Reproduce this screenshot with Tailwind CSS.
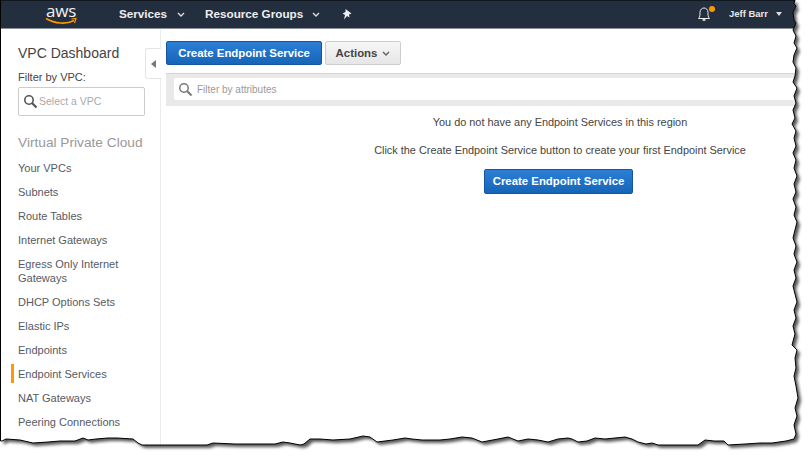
<!DOCTYPE html>
<html>
<head>
<meta charset="utf-8">
<script src="https://cdn.jsdelivr.net/npm/@tailwindcss/browser@4"></script>
</head>
<body class="bg-white">
<div class="relative w-[810px] h-[456px] overflow-hidden bg-white font-['Liberation_Sans',Arial,sans-serif] text-[#444]">

    <!-- top nav -->
    <div class="flex items-center h-[29px] bg-[#232f3e] border-b border-[#8a929c] text-white">
        <div class="w-[119px] pl-[45px] shrink-0">
            <div class="relative w-[32px] h-[25px]">
                <div class="text-[17px] leading-[18px] tracking-[-0.2px] pl-[1px] font-['Open_Sans',sans-serif] text-[#f2f2f2]">aws</div>
                <svg class="absolute left-0 top-[15px]" width="33" height="9" viewBox="0 0 33 9"><path d="M1 1.5C10 7 22 7.5 29 3.5" fill="none" stroke="#f90" stroke-width="1.6"/><path d="M26.5 2L31 1.5L29.5 6" fill="none" stroke="#f90" stroke-width="1.2"/></svg>
            </div>
        </div>
        <div class="flex items-center text-[11.7px] font-bold text-[#eee]">
            <span>Services</span>
            <svg class="ml-[10px] mt-[2px]" width="8" height="6" viewBox="0 0 8 6"><path d="M1 1L4 4L7 1" fill="none" stroke="#ddd" stroke-width="1.4"/></svg>
            <span class="ml-[20px]">Resource Groups</span>
            <svg class="ml-[9px] mt-[2px]" width="8" height="6" viewBox="0 0 8 6"><path d="M1 1L4 4L7 1" fill="none" stroke="#ddd" stroke-width="1.4"/></svg>
            <svg class="ml-[21px]" width="12" height="12" viewBox="0 0 12 12"><path d="M4.5 1L10.5 5.5L8 6.5L8.5 9.5L6 8L3 11.5L4 7L1.5 5.5L4.5 4Z" fill="#eee"/></svg>
        </div>
        <div class="ml-auto flex items-center pr-[28px]">
            <div class="relative w-[16px] h-[16px] mr-[16px]">
                <svg width="14" height="16" viewBox="0 0 14 16"><path d="M1.5 12.5C3 11 3 9 3 6.5C3 3.5 5 2 7 2C9 2 11 3.5 11 6.5C11 9 11 11 12.5 12.5Z" fill="none" stroke="#eee" stroke-width="1"/><path d="M5.5 14H8.5" stroke="#eee" stroke-width="1.6"/></svg>
                <span class="absolute -right-[2px] top-0 w-[6px] h-[6px] rounded-full bg-[#f90]"></span>
            </div>
            <span class="text-[9.5px] font-bold text-[#e8e8e8]">Jeff Barr</span>
            <svg class="ml-[8px]" width="6" height="4" viewBox="0 0 6 4"><path d="M0 0H6L3 4Z" fill="#ddd"/></svg>
        </div>
    </div>

    <div class="flex h-[427px]">
        <!-- sidebar -->
        <div class="relative w-[161px] shrink-0 border-r border-[#eaeded] pl-[18px] pt-[16px]">
            <h2 class="text-[14px] leading-[17px] text-[#444]">VPC Dashboard</h2>
            <div class="mt-[8px] text-[11px] leading-[14px] text-[#444]">Filter by VPC:</div>
            <div class="mt-[3px] flex items-center w-[127px] h-[29px] border border-[#ccc] rounded-[2px] pl-[4px]">
                <svg width="15" height="15" viewBox="0 0 15 15"><circle cx="6" cy="6" r="4.2" fill="none" stroke="#555" stroke-width="1.6"/><path d="M9 9L13.5 13.5" stroke="#555" stroke-width="2.2"/></svg>
                <span class="ml-[1px] text-[10.5px] text-[#aaa]">Select a VPC</span>
            </div>
            <div class="mt-[18px] text-[13.7px] leading-[18px] text-[#999]">Virtual Private Cloud</div>
            <ul class="mt-[7px] text-[11px] text-[#545b64]">
                <li class="h-[24px] leading-[14px] pt-[2px]">Your VPCs</li>
                <li class="h-[24px] leading-[14px] pt-[2px]">Subnets</li>
                <li class="h-[24px] leading-[14px] pt-[2px]">Route Tables</li>
                <li class="h-[24px] leading-[14px] pt-[2px]">Internet Gateways</li>
                <li class="h-[38px] leading-[14px] pt-[2px] w-[110px]">Egress Only Internet Gateways</li>
                <li class="h-[24px] leading-[14px] pt-[2px]">DHCP Options Sets</li>
                <li class="h-[24px] leading-[14px] pt-[2px]">Elastic IPs</li>
                <li class="h-[24px] leading-[14px] pt-[2px]">Endpoints</li>
                <li class="relative h-[24px] leading-[14px] pt-[2px]">Endpoint Services<span class="absolute -left-[7px] top-[-1px] w-[3px] h-[19px] bg-[#f90]"></span></li>
                <li class="h-[24px] leading-[14px] pt-[2px]">NAT Gateways</li>
                <li class="h-[24px] leading-[14px] pt-[2px]">Peering Connections</li>
            </ul>
            <!-- collapse tab -->
            <div class="absolute left-[145px] top-[19px] flex items-center justify-center w-[16px] h-[31px] bg-white border border-r-0 border-[#e5e5e5] rounded-l-[3px]">
                <svg width="5" height="8" viewBox="0 0 5 8"><path d="M5 0V8L0 4Z" fill="#777"/></svg>
            </div>
        </div>

        <!-- main -->
        <div class="w-[790px] shrink-0 pl-[5px] pt-[12px]">
            <div class="flex items-center gap-[3px]">
                <button class="w-[156px] h-[24px] pt-[1px] rounded-[2px] border border-[#15559f] bg-gradient-to-b from-[#2c7fd6] to-[#1565b8] text-[11.4px] font-bold text-white">Create Endpoint Service</button>
                <button class="flex items-center justify-center gap-[5px] w-[76px] h-[24px] pt-[1px] rounded-[2px] border border-[#ccc] bg-gradient-to-b from-[#f6f6f6] to-[#e6e6e6] text-[11.4px] font-bold text-[#444]">Actions
                    <svg width="8" height="6" viewBox="0 0 8 6"><path d="M1 1L4 4L7 1" fill="none" stroke="#666" stroke-width="1.5"/></svg>
                </button>
            </div>
            <div class="mt-[8px] h-[33px] bg-[#e9e9e9] border-t border-[#d5d5d5] pt-[4px] pl-[8px]">
                <div class="flex items-center h-[22px] bg-white rounded-[2px] pl-[4px]">
                    <svg width="15" height="15" viewBox="0 0 15 15"><circle cx="6" cy="6" r="4.2" fill="none" stroke="#777" stroke-width="1.5"/><path d="M9 9L13.5 13.5" stroke="#777" stroke-width="2"/></svg>
                    <span class="ml-[4px] mt-[1px] text-[10px] text-[#999]">Filter by attributes</span>
                </div>
            </div>
            <div class="flex flex-col items-center w-[788px]">
                <p class="mt-[9px] text-[10.9px] leading-[14px] text-[#444]">You do not have any Endpoint Services in this region</p>
                <p class="mt-[14px] text-[10.9px] leading-[14px] text-[#444]">Click the Create Endpoint Service button to create your first Endpoint Service</p>
                <button class="mt-[12px] mr-[3px] w-[149px] h-[25px] pt-[1px] rounded-[2px] border border-[#15559f] bg-gradient-to-b from-[#2c7fd6] to-[#1565b8] text-[11.4px] font-bold text-white">Create Endpoint Service</button>
            </div>
        </div>
    </div>

    <!-- torn paper edge over the screenshot -->
    <svg class="absolute inset-0 pointer-events-none" width="810" height="456" viewBox="0 0 810 456">
        <defs>
            <path id="edge" d="M0.5 0H795L794 4L796 6L793 12L794 20L796 23L793 30L796 36L794 43L797 48L794 55L793 62L796 68L795 76L793 82L797 88L794 96L796 103L793 110L795 118L792 124L796 131L794 138L796 146L793 153L796 160L794 168L797 176L794 184L796 192L793 199L796 207L794 215L797 222L795 230L793 238L796 246L794 254L797 262L794 270L796 278L793 286L795 294L797 302L794 310L796 318L793 326L795 334L792 345L797 350L795 358L796 368L794 376L796 386L798 398L795 408L797 416L794 425L796 434L794 439L786 441L772 443L760 443L745 444L728 445L724 441L714 441L705 440L698 445L680 445L658 445L652 443L646 444L638 442L632 439L625 437L615 438L605 439L595 438L587 441L578 442L572 439L568 438L558 439L548 442L538 440L528 439L518 441L508 437L498 439L482 442L472 438L462 437L450 439L440 440L422 440L412 439L405 438L393 440L385 441L377 442L370 437L363 436L350 439L333 440L320 439L310 439L304 444L300 445L290 443L283 442L275 444L267 444L250 444L235 444L213 443L207 445L175 445L142 445L138 443L133 439L117 438L108 438L96 439L88 440L83 438L75 441L60 441L48 442L33 443L20 440L6 439L2 441H0.5Z"/>
            <clipPath id="outside"><path clip-rule="evenodd" d="M0 0H810V456H0ZM0.5 0H795L794 4L796 6L793 12L794 20L796 23L793 30L796 36L794 43L797 48L794 55L793 62L796 68L795 76L793 82L797 88L794 96L796 103L793 110L795 118L792 124L796 131L794 138L796 146L793 153L796 160L794 168L797 176L794 184L796 192L793 199L796 207L794 215L797 222L795 230L793 238L796 246L794 254L797 262L794 270L796 278L793 286L795 294L797 302L794 310L796 318L793 326L795 334L792 345L797 350L795 358L796 368L794 376L796 386L798 398L795 408L797 416L794 425L796 434L794 439L786 441L772 443L760 443L745 444L728 445L724 441L714 441L705 440L698 445L680 445L658 445L652 443L646 444L638 442L632 439L625 437L615 438L605 439L595 438L587 441L578 442L572 439L568 438L558 439L548 442L538 440L528 439L518 441L508 437L498 439L482 442L472 438L462 437L450 439L440 440L422 440L412 439L405 438L393 440L385 441L377 442L370 437L363 436L350 439L333 440L320 439L310 439L304 444L300 445L290 443L283 442L275 444L267 444L250 444L235 444L213 443L207 445L175 445L142 445L138 443L133 439L117 438L108 438L96 439L88 440L83 438L75 441L60 441L48 442L33 443L20 440L6 439L2 441H0.5Z"/></clipPath>
            <filter id="blur" x="-5%" y="-5%" width="110%" height="110%"><feGaussianBlur stdDeviation="1.8"/></filter>
        </defs>
        <g clip-path="url(#outside)">
            <rect width="810" height="456" fill="#fff"/>
            <use href="#edge" transform="translate(3 3)" fill="#000" fill-opacity="0.65" filter="url(#blur)"/>
        </g>
        <use href="#edge" fill="none" stroke="#000" stroke-width="1"/>
    </svg>
</div>
</body>
</html>
